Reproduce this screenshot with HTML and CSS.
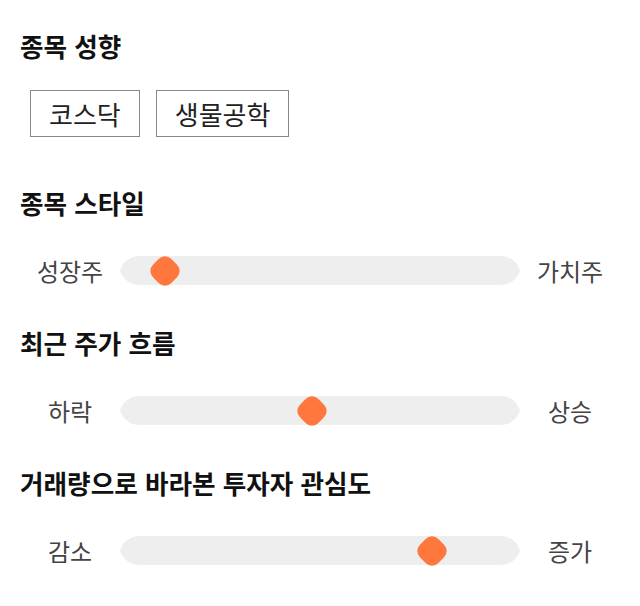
FILE: index.html
```html
<!DOCTYPE html>
<html lang="ko">
<head>
    <meta charset="UTF-8">
    <meta name="viewport" content="width=device-width, initial-scale=1.0">
    <title>종목 필터</title>
    <link rel="stylesheet" href="styles.css">
</head>
<body>
    <div id="filters">
        <section class="filter">
            <h2>종목 성향</h2>
            <div class="chips">
                <button class="chip">코스닥</button>
                <button class="chip">생물공학</button>
            </div>
        </section>

        <section class="filter">
            <h2>종목 스타일</h2>
            <div class="range">
                <span class="range-label">성장주</span>
                <div class="track">
                    <svg class="track-bg" width="400" height="29" viewBox="0 0 400 29">
                        <path d="M18 0 H382 A20.3 20.3 0 0 1 400 14.5 A20.3 20.3 0 0 1 382 29 H18 A20.3 20.3 0 0 1 0 14.5 A20.3 20.3 0 0 1 18 0 Z" />
                    </svg>
                    <span class="thumb" style="left: 45px"></span>
                </div>
                <span class="range-label">가치주</span>
            </div>
        </section>

        <section class="filter">
            <h2>최근 주가 흐름</h2>
            <div class="range">
                <span class="range-label">하락</span>
                <div class="track">
                    <svg class="track-bg" width="400" height="29" viewBox="0 0 400 29">
                        <path d="M18 0 H382 A20.3 20.3 0 0 1 400 14.5 A20.3 20.3 0 0 1 382 29 H18 A20.3 20.3 0 0 1 0 14.5 A20.3 20.3 0 0 1 18 0 Z" />
                    </svg>
                    <span class="thumb" style="left: 192px"></span>
                </div>
                <span class="range-label">상승</span>
            </div>
        </section>

        <section class="filter">
            <h2>거래량으로 바라본 투자자 관심도</h2>
            <div class="range">
                <span class="range-label">감소</span>
                <div class="track">
                    <svg class="track-bg" width="400" height="29" viewBox="0 0 400 29">
                        <path d="M18 0 H382 A20.3 20.3 0 0 1 400 14.5 A20.3 20.3 0 0 1 382 29 H18 A20.3 20.3 0 0 1 0 14.5 A20.3 20.3 0 0 1 18 0 Z" />
                    </svg>
                    <span class="thumb" style="left: 312px"></span>
                </div>
                <span class="range-label">증가</span>
            </div>
        </section>
    </div>
</body>
</html>
```

FILE: styles.css
```css
body {
    font-family: 'Noto Sans CJK KR', 'Noto Sans', sans-serif;
    background-color: #fff;
    color: #111;
    margin: 0;
}

#filters {
    width: 600px;
    padding: 30px 20px 0;
}

.filter h2 {
    font-size: 25.6px;
    font-weight: bold;
    line-height: 32px;
    margin: 0;
    color: #111;
}

.chips {
    display: flex;
    gap: 16px;
    margin: 28px 0 50px 10px;
}

.chip {
    font-family: inherit;
    font-size: 26px;
    color: #222;
    background-color: #fff;
    border: 1px solid #888;
    height: 47px;
    padding: 0 18px;
    line-height: 45px;
}

.range {
    display: grid;
    grid-template-columns: 100px 400px 100px;
    align-items: center;
    height: 29px;
    margin: 37px 0 42px;
}

.range-label {
    font-size: 24px;
    line-height: 29px;
    color: #444;
    text-align: center;
}

.track {
    position: relative;
    height: 29px;
}

.track-bg {
    display: block;
    fill: #eeeeee;
}

.thumb {
    position: absolute;
    top: 14.5px;
    width: 26px;
    height: 26px;
    margin: -13px 0 0 -13px;
    background-color: #ff773d;
    border-radius: 9px;
    transform: rotate(45deg);
}
```
